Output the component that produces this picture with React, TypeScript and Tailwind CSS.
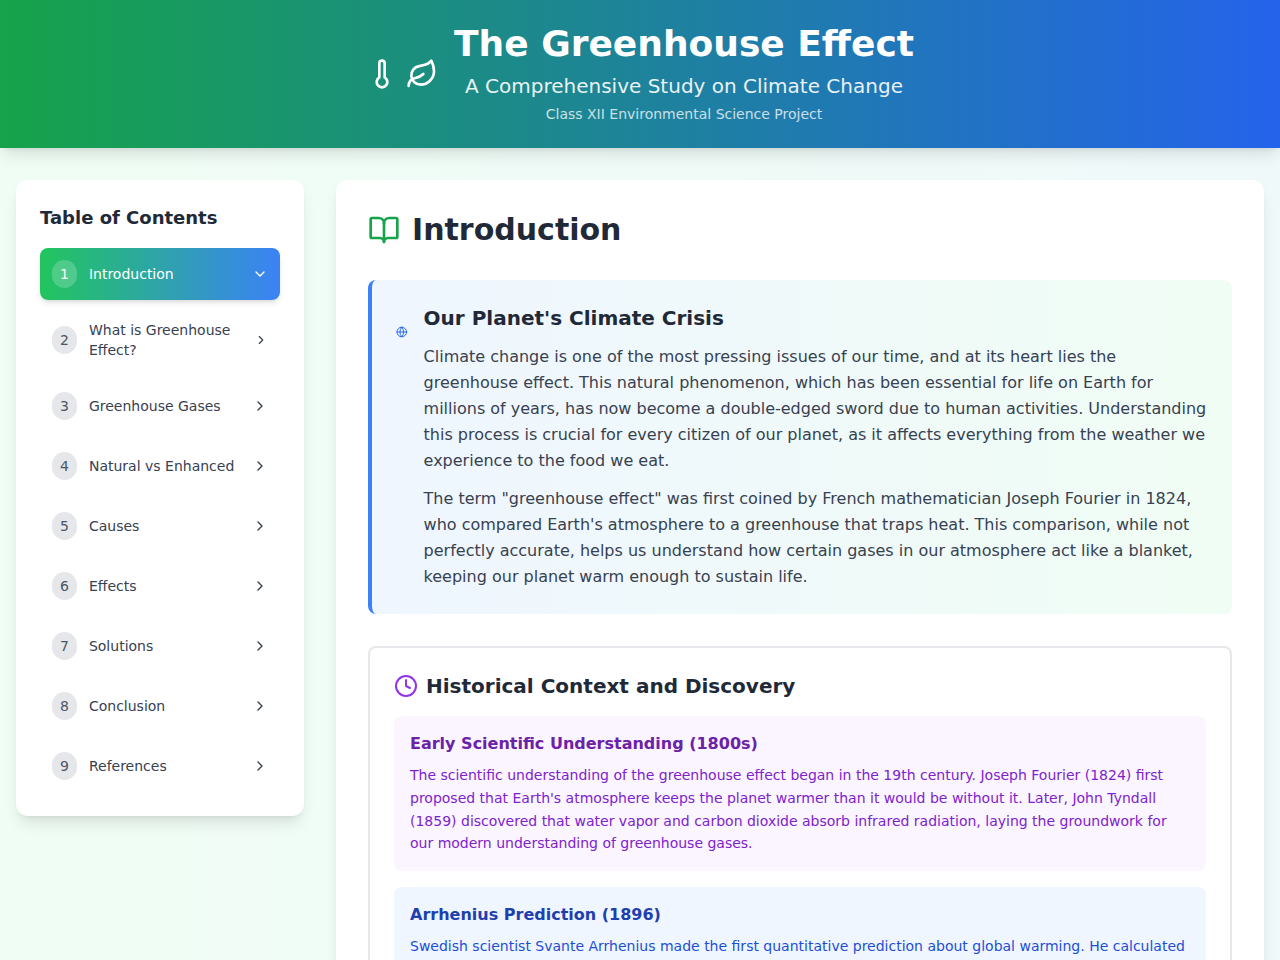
import { useState } from 'react';
import { BookOpen, ChevronDown, ChevronRight, Clock, Globe, Leaf, Thermometer } from 'lucide-react';

const sections = [
  'Introduction',
  'What is Greenhouse Effect?',
  'Greenhouse Gases',
  'Natural vs Enhanced',
  'Causes',
  'Effects',
  'Solutions',
  'Conclusion',
  'References',
];

function Header() {
  return (
    <header className="bg-linear-to-r/srgb from-[#16a34a] to-[#2563eb] text-white shadow-lg">
      <div className="flex items-center justify-center gap-4 px-4 py-6">
        <div className="flex items-center gap-2">
          <Thermometer size={32} />
          <Leaf size={32} />
        </div>
        <div className="text-center">
          <h1 className="text-4xl font-bold">The Greenhouse Effect</h1>
          <p className="text-xl mt-2 opacity-90">A Comprehensive Study on Climate Change</p>
          <p className="text-sm mt-1 opacity-75">Class XII Environmental Science Project</p>
        </div>
      </div>
    </header>
  );
}

function Sidebar({ active, onSelect }: { active: number; onSelect: (index: number) => void }) {
  return (
    <aside className="bg-white rounded-xl shadow-lg p-6 self-start">
      <h2 className="text-lg font-bold mb-4 text-[#1f2937]">Table of Contents</h2>
      <nav className="space-y-2">
        {sections.map((title, index) => {
          const isActive = index === active;
          return (
            <button
              key={title}
              onClick={() => onSelect(index)}
              className={`w-full flex items-center justify-between p-3 rounded-lg text-left text-sm ${
                isActive
                  ? 'bg-linear-to-r/srgb from-[#22c55e] to-[#3b82f6] text-white shadow-md'
                  : 'text-[#374151] hover:bg-[#f3f4f6]'
              }`}
            >
              <span className="flex items-center gap-3">
                <span
                  className={`px-2 py-1 rounded-full ${
                    isActive ? 'bg-white/20' : 'bg-[#e5e7eb] text-[#4b5563]'
                  }`}
                >
                  {index + 1}
                </span>
                <span>{title}</span>
              </span>
              {isActive ? <ChevronDown size={16} /> : <ChevronRight size={16} />}
            </button>
          );
        })}
      </nav>
    </aside>
  );
}

function Introduction() {
  return (
    <section>
      <div className="flex items-center gap-3 mb-8">
        <BookOpen size={32} className="text-[#16a34a]" />
        <h2 className="text-3xl font-bold text-[#1f2937]">Introduction</h2>
      </div>

      {/* Overview */}
      <div className="bg-linear-to-r/srgb from-[#eff6ff] to-[#f0fdf4] border-l-4 border-[#3b82f6] rounded-lg p-6 mb-8">
        <div className="flex items-start gap-4">
          <Globe size={48} className="mt-1 text-[#2563eb]" />
          <div>
            <h3 className="text-xl font-semibold mb-3 text-[#1f2937]">Our Planet's Climate Crisis</h3>
            <p className="leading-relaxed mb-3 text-[#374151]">
              Climate change is one of the most pressing issues of our time, and at its heart lies the
              greenhouse effect. This natural phenomenon, which has been essential for life on Earth for
              millions of years, has now become a double-edged sword due to human activities. Understanding
              this process is crucial for every citizen of our planet, as it affects everything from the
              weather we experience to the food we eat.
            </p>
            <p className="leading-relaxed text-[#374151]">
              The term "greenhouse effect" was first coined by French mathematician Joseph Fourier in 1824,
              who compared Earth's atmosphere to a greenhouse that traps heat. This comparison, while not
              perfectly accurate, helps us understand how certain gases in our atmosphere act like a
              blanket, keeping our planet warm enough to sustain life.
            </p>
          </div>
        </div>
      </div>

      {/* History */}
      <div className="border-2 border-[#e5e7eb] rounded-lg p-6">
        <h3 className="flex items-center gap-2 text-xl font-semibold mb-4 text-[#1f2937]">
          <Clock size={24} className="text-[#9333ea]" />
          Historical Context and Discovery
        </h3>
        <div className="space-y-4">
          <div className="bg-[#faf5ff] rounded-lg p-4">
            <h4 className="font-semibold mb-2 text-[#6b21a8]">Early Scientific Understanding (1800s)</h4>
            <p className="text-sm leading-relaxed text-[#7e22ce]">
              The scientific understanding of the greenhouse effect began in the 19th century. Joseph
              Fourier (1824) first proposed that Earth's atmosphere keeps the planet warmer than it would be
              without it. Later, John Tyndall (1859) discovered that water vapor and carbon dioxide absorb
              infrared radiation, laying the groundwork for our modern understanding of greenhouse gases.
            </p>
          </div>
          <div className="bg-[#eff6ff] rounded-lg p-4">
            <h4 className="font-semibold mb-2 text-[#1e40af]">Arrhenius Prediction (1896)</h4>
            <p className="text-sm leading-relaxed text-[#1d4ed8]">
              Swedish scientist Svante Arrhenius made the first quantitative prediction about global
              warming. He calculated
            </p>
          </div>
        </div>
      </div>
    </section>
  );
}

export default function App() {
  const [activeSection, setActiveSection] = useState(0);

  return (
    <div className="min-h-screen bg-linear-to-r/srgb from-[#f0fdf4] to-[#eff9fa] font-['DejaVu_Sans',sans-serif]">
      <Header />
      <div className="grid grid-cols-1 md:grid-cols-4 gap-8 px-4 py-8">
        <Sidebar active={activeSection} onSelect={setActiveSection} />
        <main className="md:col-span-3 bg-white rounded-xl shadow-lg p-8">
          {activeSection === 0 ? (
            <Introduction />
          ) : (
            <h2 className="text-3xl font-bold text-[#1f2937]">{sections[activeSection]}</h2>
          )}
        </main>
      </div>
    </div>
  );
}
